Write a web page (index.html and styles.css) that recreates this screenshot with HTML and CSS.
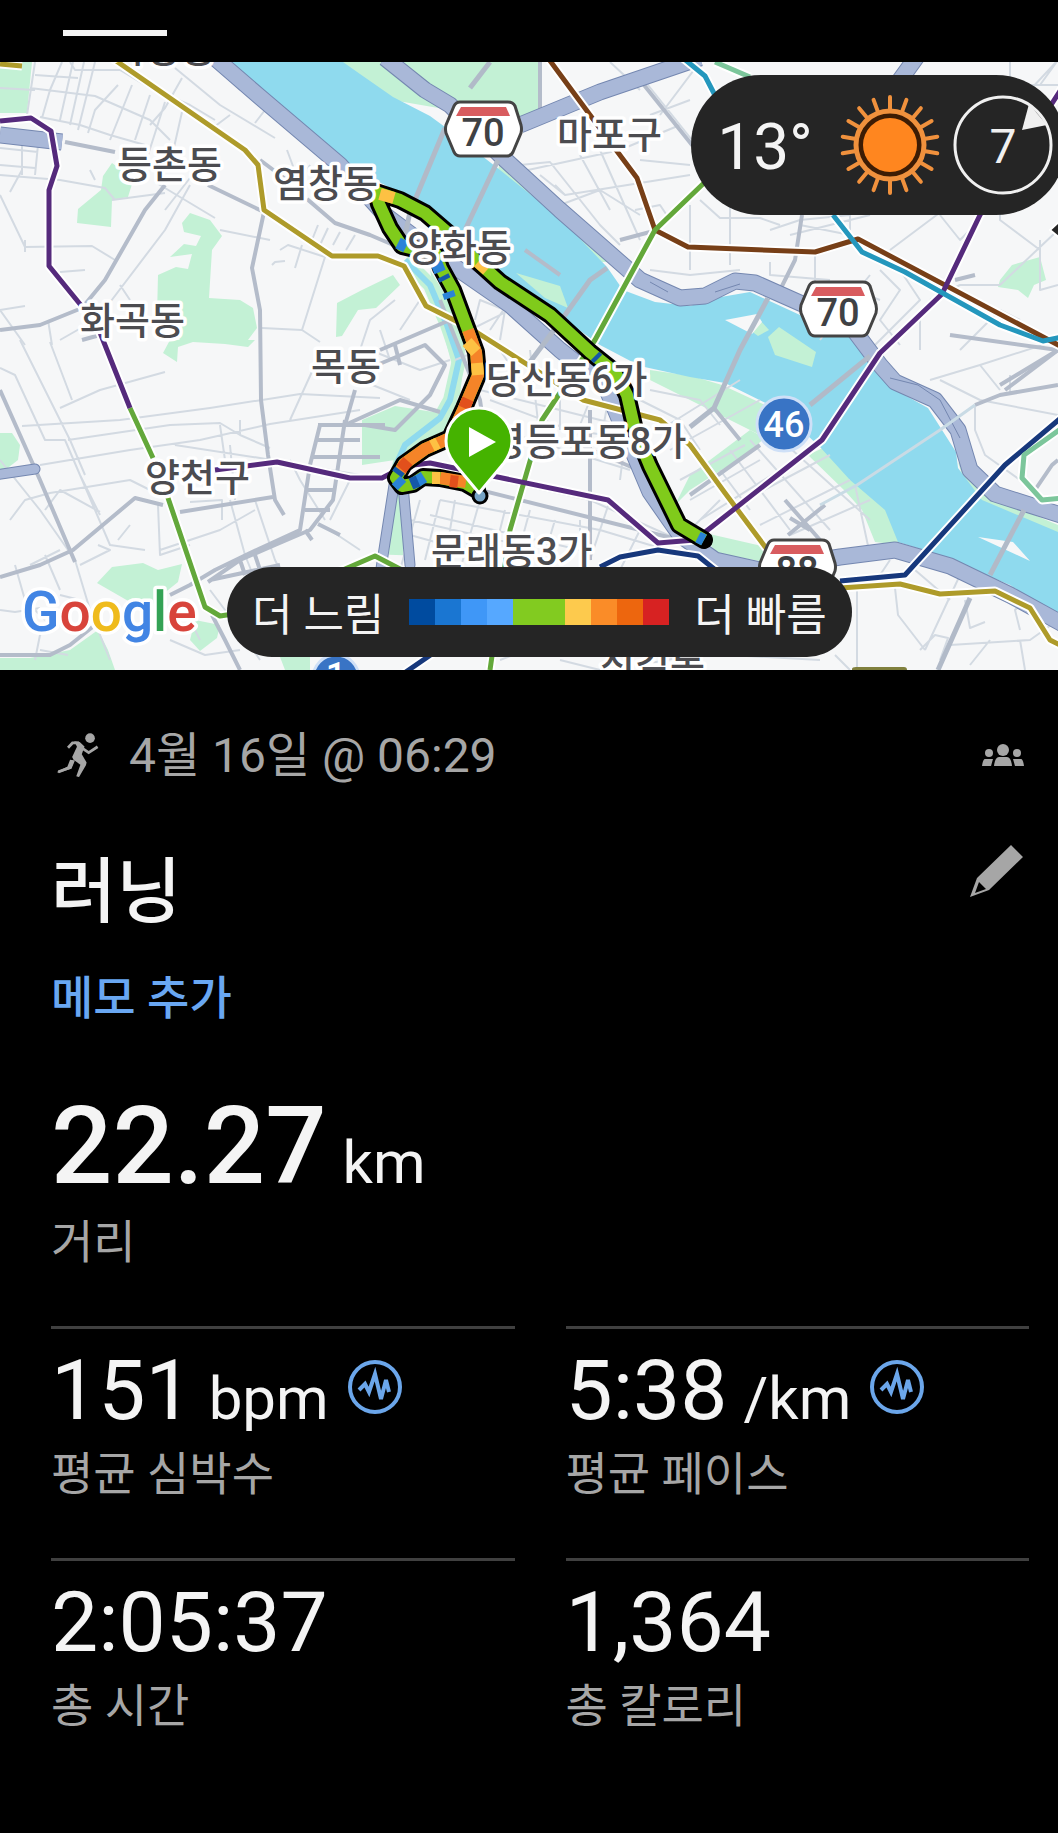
FILE: index.html
```html
<!DOCTYPE html>
<html lang="ko">
<head>
    <meta charset="UTF-8">
    <meta name="viewport" content="width=device-width, initial-scale=1.0">
    <title>러닝</title>
    <link rel="stylesheet" href="styles.css">
</head>
<body>
    <header class="tabs">
        <div class="tab-indicator"></div>
    </header>

    <section class="map">
        <svg class="map-canvas" viewBox="0 62 1058 608" role="img" aria-label="지도">
            <rect class="land" x="0" y="62" width="1058" height="608"/>

            <!-- parks -->
            <g class="park">
                <path d="M0 62H32L27 113H0Z"/>
                <path d="M77 223L78 209L101 190L103 176L112 163L124 172L132 184L128 197L112 200L111 227Z"/>
                <path d="M182 223L190 213L210 220L222 236L212 250L209 298L240 300L253 308L257 328L248 340H200L180 340L157 315L158 275L176 267L188 269L192 254L170 257L184 244L196 246L201 236L184 232Z"/>
                <path d="M163 353L170 340H255L248 347L225 344L193 342L178 347L177 362Z"/>
                <path d="M336 337L337 303L362 290L393 275L400 285L376 308L358 310L342 336Z"/>
                <path d="M0 433L12 433L20 445L18 460L0 474Z"/>
                <path d="M97 583L112 567L143 563L158 570L182 564L178 582L163 594L158 604L130 602Z"/>
                <path d="M0 658L30 658L70 650L98 630L108 650L115 670H0Z"/>
                <path d="M195 620L220 625L217 638L200 651L190 640Z"/>
                <path d="M280 657H310V670H285Z"/>
                <path d="M342 62H540V110L525 120L500 160L450 110L392 100L342 76Z"/>
                <path d="M500 162L560 212L610 262L602 262L540 205L498 170Z"/>
                <path d="M1000 280L1012 265L1040 257L1046 280L1034 285L1028 298L1018 290L998 287Z"/>
                <path d="M362 420L395 406L440 413L465 395L455 425L425 445L395 460L362 465Z"/>
                <path d="M430 270L458 315L465 350L460 395L445 410L452 365L440 320Z"/>
                <path d="M650 370L692 376L722 385L765 405L790 430L760 435L690 400L650 380Z"/>
                <path d="M690 475L750 430L765 438L745 455L690 490L675 505Z"/>
                <path d="M808 455L825 447L862 478L890 510L900 545L875 542L862 510L846 492Z"/>
                <path d="M705 533L770 548L765 562L715 553Z"/>
                <path d="M958 462L980 492L1058 525V540L985 505L965 485Z"/>
            </g>

            <!-- river and stream -->
            <path class="water" d="M222 62H343L360 74L393 97L430 116L445 127L500 170L560 218L607 267L623 290L655 302L690 306L715 298L750 292L800 315L860 342L878 365L892 388L928 408L956 452L958 468L982 500L1058 532V616L1010 585L930 552L898 542L885 510L850 480L820 447L780 410L725 383L690 377L640 366L600 345L540 302L480 256L430 215L385 185L343 165L280 107Z"/>
            <path class="stream-bank" d="M405 260L430 285L447 325L459 360L450 400L440 418L405 445L398 470L396 555"/>
            <path class="stream" d="M405 260L430 285L447 325L459 360L450 400L440 418L405 445L396 465"/>
            <g class="park">
                <path d="M516 273L560 286L568 308L545 298Z"/>
                <path d="M758 318L769 330L758 336L750 330Z"/>
                <path d="M768 337L779 327L816 352L812 367L775 355Z"/>
            </g>
            <path class="land" d="M725 320L757 314L762 322L752 334ZM978 537L1013 542L1030 561Z"/>

            <!-- small streets -->
            <path class="street" d="M35 62L27 115M62 62L50 90L42 118M73 62L60 120M84 62L70 125M95 62L78 130M118 85L95 110L88 133M132 85L110 140M150 95L135 140M165 102L148 155M182 112L170 165M35 75L78 78M30 88L95 96L150 120L170 140M40 117L80 125L110 135L145 145M0 88L35 90M0 148L38 152M0 165L35 168M22 143V175M38 145L35 175M0 175L60 180L105 188L115 200M10 192L22 170M0 195L25 247L92 246L115 260M25 240V252M60 272L85 270M112 200L165 193M90 170L95 180M155 182L215 218M165 210L190 178M108 305L165 230L190 185M120 285L130 300M175 68L220 105L275 138M210 130L230 115M255 123L265 110M182 78L165 108L150 125M240 90L215 65M70 62L75 70H120L150 88L190 105L215 120M287 150L300 185M302 180L310 165M220 230L270 240M272 265L275 262L285 261M280 250L288 245L325 257L302 330L320 342M302 330L262 328M295 268L302 245M310 245L318 225M320 245L328 228M333 245L340 232M346 250L355 235M0 310L25 345M0 310L25 306M48 320L52 345M60 340L95 320"/>
            <path class="street" d="M20 340L45 390L70 440L85 475M50 342L72 400M60 408L100 390L165 372M22 426L120 420L210 408L300 394L380 398M68 440L170 425L220 423L240 435L270 448M40 465L130 450L200 440L270 424L360 410M175 445L260 458L360 475M0 368L15 375L45 440L65 440L110 545L145 550M65 440L80 475L100 515M0 460L40 510L75 560M10 520L25 500L50 493L130 480L150 490M158 505L160 555L190 545M45 510L60 490L100 512M118 540L130 525M160 550L220 530L255 510M190 502L222 500L222 520M230 500L245 555L255 580M255 500L275 560L290 590M300 480L325 520M350 480L330 520M330 530L360 550M0 610L15 612L40 608M15 565L25 600L45 620M45 555L60 590M75 560L90 610L110 660M80 565L110 550L98 545M30 565L60 550M60 595L80 600M35 660L40 635L60 620M40 650L68 655M210 590L240 630L260 660M170 640L205 655L240 650M180 600L200 640M290 590L320 620M240 420V435M220 425L225 460M230 445L235 500M290 460L300 480M290 420L315 365"/>
            <path class="street" d="M520 165L550 162L600 225L620 245M528 170L620 150L680 125M540 175L565 195L690 175M580 155L610 210M600 150L640 240M560 205L600 190L640 215M565 195L555 185M610 62L640 90M640 75L700 150M650 115L690 100M700 62L660 115M635 210L660 205L670 220M650 270L690 275L740 270M690 205V270M730 190V265M700 200L720 218H760L780 225M770 230L800 220L850 215M790 235L870 215M850 210V235L800 225M690 240V262M770 262V275L830 280M815 255V290M870 275L850 300L820 340M880 270L900 290L880 320L900 345M830 320L870 350L900 320M880 300L840 285M900 270L920 300L890 330M920 310V350M930 300L960 285H1000L1058 230M890 250L970 190L1058 150M940 215L960 240L975 225M1000 180V220L1040 250M1040 240V290L1058 285M960 350L1000 310L1020 320M1010 62V85H1058M1030 90L1058 60M1058 60L1040 85M930 380L980 365L1058 340M940 380L980 400L1058 415M975 405V430L985 455L1020 480M1010 375V395M980 365L1000 390M700 150L740 180M640 160L690 165"/>
            <path class="street" d="M500 350L510 365M470 330L530 300M455 360L480 350M475 320L480 300L505 310L500 340M510 300L490 330M480 390L560 410L620 425M490 400L570 430L640 440M500 430L630 470M530 350L540 440M560 360V430M590 400L570 450M610 390L600 445M630 400L620 480M440 500L600 530L700 560M430 515L580 550M450 470L590 500L690 545M420 500L400 570M440 500L425 560M455 500L445 560M480 500L460 570M505 510L490 570M530 510L515 565M555 520L540 570M580 520V560M610 500L590 560M640 530L620 570M410 520L520 545M410 535L500 560M370 350L420 370L450 360M360 380L410 400M380 330L390 360M395 300L370 320L360 350M420 300L400 330M650 390L700 400L720 425M640 400L680 420L700 450M660 430L740 380M670 450L760 400M680 480L745 445M690 500L760 460M700 520L780 470M730 450L790 530M750 440L830 530M770 430L870 520M720 470L750 510M745 500L830 455M760 525L850 480M790 535L870 500M690 530L720 500M855 485L870 555"/>
            <path class="street" d="M857 580V670M895 588L898 615L925 650M925 650L960 575M920 650L935 635L948 638L940 660M950 645L1030 640L1058 620M965 600L970 628L985 622M1020 630L1015 610L1025 600M1020 640L1025 670M970 665L990 640M500 660L540 645M560 660L600 670M640 665L720 650M730 655L820 660M835 655L850 670M880 575L890 560M915 570L950 600"/>

            <!-- main roads -->
            <g class="road">
                <path d="M65 142L115 152M208 185L264 212L252 268L260 310L261 400L268 455L275 500L284 515"/>
                <path d="M0 330L40 325L82 308L105 280L145 210L165 185M82 340L100 335"/>
                <path d="M0 390L40 480L75 562M0 577L40 565L73 550L135 498L163 505M180 512L273 497"/>
                <path d="M307 199L335 223L370 235L405 250M260 160L300 190"/>
                <path d="M345 420L333 500L310 530L275 545L240 560L208 582M320 425L310 465L300 530L250 553L215 570L190 585L170 595M318 425H385M316 440H360M313 457H380M308 490H335M305 510H330M318 524L340 535M355 390L345 425M210 580L280 565M240 560L245 575M255 555L260 570M305 530L312 540"/>
                <path d="M0 655H50L70 645L95 625M212 615L225 640L240 670M540 62V110M640 80L720 180"/>
                <path d="M345 425L400 400L440 412M380 350L450 320M365 370L425 345L445 365L430 395L395 430L365 425M395 345L400 365"/>
                <path d="M620 240L650 232M525 250L560 275M440 480L700 545M580 445L650 475M590 410V560"/>
                <path d="M690 495L760 445M714 408L740 440M785 500L820 540M788 535L825 505M790 518L810 530M950 335L1058 350M955 280L975 275M1058 350L1005 390"/>
                <path d="M440 300L480 400L490 470M802 215L795 260L780 290M1058 385L1000 395L975 405M1058 350L1000 385M1035 490L1052 465L1058 460"/>
            </g>

            <!-- expressways -->
            <g class="expressway-edge">
                <path d="M215 58L260 97L340 165L385 215L445 260L510 305L560 350L605 385L628 440L650 492L680 535L715 560L760 570L840 557L895 550L950 566L1010 595L1070 628"/>
                <path d="M385 58L425 90L450 105L500 155L560 210L600 245L640 280L680 298L705 296L735 281L755 283L800 303L850 325L880 365L895 382L935 400L958 430L970 470L995 494L1070 518"/>
                <path d="M520 125L600 92L700 58M0 135L62 142M900 80L918 55"/>
            </g>
            <g class="expressway">
                <path d="M215 58L260 97L340 165L385 215L445 260L510 305L560 350L605 385L628 440L650 492L680 535L715 560L760 570L840 557L895 550L950 566L1010 595L1070 628"/>
                <path d="M385 58L425 90L450 105L500 155L560 210L600 245L640 280L680 298L705 296L735 281L755 283L800 303L850 325L880 365L895 382L935 400L958 430L970 470L995 494L1070 518"/>
                <path d="M520 125L600 92L700 58M0 135L62 142M900 80L918 55"/>
            </g>
            <path class="link-edge" d="M-5 475L35 469M394 485L380 575M403 485L410 565"/>
            <path class="link" d="M-5 475L35 469M394 485L380 575M403 485L410 565"/>
            <path class="ramp" d="M890 378L918 385L940 400L960 438M715 292L740 284M650 282L668 292"/>

            <!-- bridges -->
            <g class="bridge">
                <path d="M490 62L470 88M445 128L410 212L404 240M498 160L465 230M607 268L590 280L560 322L530 362M768 298L740 350L714 408L690 427"/>
                <path d="M870 356L810 405M1024 510L990 575M970 598L938 670"/>
                <path class="bridge-light" d="M820 505L857 485L940 430L975 405"/>
            </g>

            <!-- subway lines, white casing below -->
            <g class="subway-casing">
                <path d="M0 64L22 66M112 58L245 150L258 165L264 210L332 256L378 256L404 266L426 306L470 328L528 365L583 400L660 420L690 445L725 493L775 560M840 588L900 584L940 594L995 591L1030 608L1050 640L1062 646"/>
                <path d="M0 121L31 118L51 131L57 166L49 190V266L97 325L130 408M215 470L277 462L350 478H382L405 466L430 463L608 500L658 543L695 540L822 440L880 353L942 294L980 215L1062 88"/>
                <path d="M130 408L153 458M167 495L205 607L220 616L240 613L345 569L375 556L400 569M705 182L655 230L595 340L542 420L510 530L490 670"/>
                <path d="M548 58L590 115L637 178L655 230L688 247L815 252L858 239L1062 347M683 58L705 76L720 105M833 215L862 252L905 272L1000 325L1043 341L1062 337"/>
                <path d="M600 567L620 557L658 550L698 556L718 572M400 676L445 645M840 581L905 575L1005 465L1062 417M1062 428L1024 455L1022 478L1042 500L1062 498M715 62L750 77"/>
            </g>
            <g class="subway">
                <path class="gold" d="M0 64L22 66M112 58L245 150L258 165L264 210L332 256L378 256L404 266L426 306L470 328L528 365L583 400L660 420L690 445L725 493L775 560M840 588L900 584L940 594L995 591L1030 608L1050 640L1062 646"/>
                <path class="brown" d="M548 58L590 115L637 178L655 230L688 247L815 252L858 239L1062 347"/>
                <path class="green" d="M130 408L153 458M167 495L205 607L220 616L240 613L345 569L375 556L400 569M705 182L655 230L595 340L542 420L510 530L490 670"/>
                <path class="purple" d="M0 121L31 118L51 131L57 166L49 190V266L97 325L130 408M215 470L277 462L350 478H382L405 466L430 463L608 500L658 543L695 540L822 440L880 353L942 294L980 215L1062 88"/>
                <path class="cyan" d="M683 58L705 76L720 105M833 215L862 252L905 272L1000 325L1043 341L1062 337"/>
                <path class="navy" d="M600 567L620 557L658 550L698 556L718 572M400 676L445 645M840 581L905 575L1005 465L1062 417"/>
                <path class="mint" d="M1062 428L1024 455L1022 478L1042 500L1062 498M715 62L750 77"/>
            </g>
            <path class="line-badge" d="M852 670V669Q852 667 856 667H904Q907 667 907 670Z"/>

            <!-- recorded track, coloured by pace -->
            <path class="track-edge" d="M477 490L465 483L440 478L423 477L413 484L402 486L396 478L404 464L425 449L450 438L464 408L478 375L476 352L466 325L453 290L441 268L436 254L402 246L390 228L379 204L376 192L400 200L425 213L447 232L478 262L500 282L550 315L590 352L615 372L627 395L635 430L650 466L679 525L704 540"/>
            <path class="track" d="M477 490L465 483L440 478L423 477L413 484L402 486L396 478L404 464L425 449L450 438L464 408L478 375L476 352L466 325L453 290L441 268L436 254L402 246L390 228L379 204L376 192L400 200L425 213L447 232L478 262L500 282L550 315L590 352L615 372L627 395L635 430L650 466L679 525L704 540"/>
            <g class="track">
                <path class="fast" d="M466 482L440 478M400 472L404 464L425 449L450 438L464 408L478 375L476 352L468 330"/>
                <path class="warm" d="M467 342L476 352M478 375L477 363M440 478L432 478M432 446L438 443M380 194L394 198M478 262L487 270"/>
                <path class="red" d="M458 482L450 481M464 408L468 399M401 469L408 461"/>
                <path class="slow" d="M424 477L416 482M402 486L396 480M436 262L440 272M448 292L450 298M398 243L406 247M698 537L704 540"/>
                <path class="blue" d="M418 481L411 484M397 474L400 470M595 356L598 359M443 276L445 280"/>
            </g>
            <circle class="track-end" cx="480" cy="496" r="7"/>

            <!-- place names -->
            <g class="place">
                <text x="111" y="62">가양동</text>
                <text x="117" y="178">등촌동</text>
                <text x="273" y="197">염창동</text>
                <text x="407" y="261">양화동</text>
                <text x="557" y="148">마포구</text>
                <text x="80" y="334">화곡동</text>
                <text x="311" y="380">목동</text>
                <text x="486" y="393">당산동6가</text>
                <text x="490" y="455">영등포동8가</text>
                <text x="145" y="491">양천구</text>
                <text x="431" y="565">문래동3가</text>
                <text x="600" y="679">신길동</text>
            </g>

            <!-- route shields -->
            <g class="shield">
                <path class="shield-body" d="M460 102H508Q513 102 515 106L521 125Q522 129 521 133L513 152Q511 156 507 156H460Q456 156 454 152L446 133Q445 129 446 125L454 106Q456 102 460 102Z"/>
                <path class="shield-top" d="M461 107H506L510 116H456Z"/>
                <text x="483" y="146">70</text>
            </g>
            <g class="shield">
                <path class="shield-body" d="M815 282H863Q868 282 870 286L876 305Q877 309 876 313L868 332Q866 336 862 336H815Q811 336 809 332L801 313Q800 309 801 305L809 286Q811 282 815 282Z"/>
                <path class="shield-top" d="M816 287H861L865 296H811Z"/>
                <text x="838" y="326">70</text>
            </g>
            <g class="shield">
                <path class="shield-body" d="M774 540H822Q827 540 829 544L835 563Q836 567 835 571L827 590Q825 594 821 594H774Q770 594 768 590L760 571Q759 567 760 563L768 544Q770 540 774 540Z"/>
                <path class="shield-top" d="M775 545H820L824 554H770Z"/>
                <text x="797" y="584">88</text>
            </g>
            <g class="route-badge">
                <circle cx="784" cy="424" r="27"/>
                <text x="784" y="437">46</text>
                <circle cx="336" cy="678" r="23"/>
                <text x="336" y="688">1</text>
            </g>

            <!-- start pin -->
            <path class="pin" d="M479 493L454 463Q446 452 446 441A33 33 0 0 1 512 441Q512 452 504 463Z"/>
            <path class="pin-play" d="M469 427V457L496 442Z"/>
            <path class="nav-arrow" d="M1050 230L1062 219V240Z"/>

            <text class="google" x="22" y="631"><tspan class="g-blue">G</tspan><tspan class="g-red">o</tspan><tspan class="g-yellow">o</tspan><tspan class="g-blue">g</tspan><tspan class="g-green">l</tspan><tspan class="g-red">e</tspan></text>
        </svg>

        <div class="weather">
            <span class="temperature">13°</span>
            <svg class="sun" viewBox="-50 -50 100 100" aria-hidden="true">
                <circle class="sun-ring" r="34"/>
                <circle class="sun-core" r="27"/>
                <path class="sun-rays" id="rays" d="M0 -48V-36M0 48V36"/>
                <use href="#rays" transform="rotate(20)"/>
                <use href="#rays" transform="rotate(40)"/>
                <use href="#rays" transform="rotate(60)"/>
                <use href="#rays" transform="rotate(80)"/>
                <use href="#rays" transform="rotate(100)"/>
                <use href="#rays" transform="rotate(120)"/>
                <use href="#rays" transform="rotate(140)"/>
                <use href="#rays" transform="rotate(160)"/>
            </svg>
            <svg class="wind" viewBox="-50 -50 100 100" role="img" aria-label="바람 7">
                <circle r="48"/>
                <path d="M26 -41L19 -15L44 -20Z"/>
                <text y="18">7</text>
            </svg>
        </div>

        <div class="legend">
            <span>더 느림</span>
            <div class="legend-bar">
                <i class="c1"></i><i class="c2"></i><i class="c3"></i><i class="c4"></i><i class="c5"></i><i class="c5"></i><i class="c6"></i><i class="c7"></i><i class="c8"></i><i class="c9"></i>
            </div>
            <span>더 빠름</span>
        </div>
    </section>

    <main class="activity">
        <div class="row date-row">
            <svg class="runner" viewBox="52 98 122 130" aria-hidden="true">
                <circle cx="148" cy="113" r="14"/>
                <path class="torso" d="M102 122L118 124L132 137L124 160L138 184L136 192L116 226L108 224L120 190L100 176L96 168L110 138Z"/>
                <path class="limb" d="M84 141L97 127L116 127M124 141L144 155L170 138M98 178L90 198L56 211"/>
                <path class="torso" d="M90 176L104 178L94 202L54 214V209L82 196Z"/>
            </svg>
            <span class="date">4월 16일 @ 06:29</span>
            <svg class="group" viewBox="0 0 42 22" aria-hidden="true">
                <circle cx="21" cy="6" r="6"/>
                <path d="M12 22Q13 13 17 13H25Q29 13 30 22Z"/>
                <circle cx="7" cy="9" r="4"/>
                <path d="M0 22Q1 15 3 15H11L9 22Z"/>
                <circle cx="35" cy="9" r="4"/>
                <path d="M42 22Q41 15 39 15H31L33 22Z"/>
            </svg>
        </div>

        <div class="row title-row">
            <h1>러닝</h1>
            <button class="edit" type="button" aria-label="편집">
                <svg viewBox="0 0 54 54" aria-hidden="true">
                    <path d="M41 1L53 13L19 46L0 53L7 34ZM9 38L5 49L16 45Z" fill-rule="evenodd"/>
                </svg>
            </button>
        </div>

        <a class="memo" href="#memo">메모 추가</a>

        <div class="stat stat-main">
            <div class="value">22.27 <span class="unit">km</span></div>
            <div class="label">거리</div>
        </div>

        <div class="stats">
            <div class="stat">
                <div class="value">151 <span class="unit">bpm</span>
                    <button class="pulse" type="button" aria-label="심박수 그래프">
                        <svg viewBox="0 0 54 54" aria-hidden="true"><circle cx="27" cy="27" r="25"/><path d="M11 30L17 24L21 32L27 14L33 39L38 20L41 32"/></svg>
                    </button>
                </div>
                <div class="label">평균 심박수</div>
            </div>
            <div class="stat">
                <div class="value">5:38 <span class="unit">/km</span>
                    <button class="pulse" type="button" aria-label="페이스 그래프">
                        <svg viewBox="0 0 54 54" aria-hidden="true"><circle cx="27" cy="27" r="25"/><path d="M11 30L17 24L21 32L27 14L33 39L38 20L41 32"/></svg>
                    </button>
                </div>
                <div class="label">평균 페이스</div>
            </div>
            <div class="stat">
                <div class="value">2:05:37</div>
                <div class="label">총 시간</div>
            </div>
            <div class="stat">
                <div class="value">1,364</div>
                <div class="label">총 칼로리</div>
            </div>
        </div>
    </main>
</body>
</html>
```
FILE: styles.css
```css
* {
    box-sizing: border-box;
}
body {
    margin: 0;
    background: #000;
    color: #f4f4f4;
    font-family: Roboto, "Noto Sans CJK KR", sans-serif;
}
button {
    padding: 0;
    border: none;
    background: none;
    cursor: pointer;
}
svg {
    display: block;
}

/* top bar */
.tabs {
    height: 62px;
    padding: 30px 63px 0;
}
.tab-indicator {
    width: 104px;
    height: 6px;
    background: #f4f4f4;
}

/* map */
.map {
    position: relative;
    overflow: hidden;
}
.map-canvas {
    width: 100%;
}
.map-canvas path {
    fill: none;
    stroke-linejoin: round;
}
.map-canvas .land {
    fill: #f6f7f8;
}
.map-canvas .park path {
    fill: #c3f1d5;
}
.map-canvas .water {
    fill: #8fdaee;
}
.stream-bank {
    stroke: #c3f1d5;
    stroke-width: 14;
}
.stream {
    stroke: #8fdaee;
    stroke-width: 6;
}
.street {
    stroke: #d3dae2;
    stroke-width: 2;
}
.road {
    stroke: #b4bcca;
    stroke-width: 4;
}
.expressway-edge {
    stroke: #7487b0;
    stroke-width: 17;
}
.expressway {
    stroke: #a9b8d8;
    stroke-width: 15;
}
.link-edge {
    stroke: #7487b0;
    stroke-width: 11;
    stroke-linecap: round;
}
.link {
    stroke: #a9b8d8;
    stroke-width: 9;
    stroke-linecap: round;
}
.ramp {
    stroke: #7487b0;
    stroke-width: 1;
}
.bridge {
    stroke: #b1bac8;
    stroke-width: 5;
}
.bridge-light {
    stroke: #c9dbe5;
    stroke-width: 3;
}
.subway-casing {
    stroke: #fff;
    stroke-width: 9;
}
.subway {
    stroke-width: 5;
}
.gold { stroke: #ae9b2a; }
.brown { stroke: #773f17; }
.green { stroke: #63a83a; }
.purple { stroke: #552a7c; }
.cyan { stroke: #2497bd; }
.navy { stroke: #17387c; }
.mint { stroke: #7cc69b; }
.map-canvas .line-badge {
    fill: #80803e;
}
.track-edge {
    stroke: #000;
    stroke-width: 18;
    stroke-linecap: round;
}
.track {
    stroke: #80cb1b;
    stroke-width: 12;
}
.track .fast { stroke: #f58428; }
.track .warm { stroke: #fdc143; }
.track .red { stroke: #e2501c; }
.track .slow { stroke: #2a83d8; }
.track .blue { stroke: #1558a8; }
.track-end {
    fill: #76a3c4;
    stroke: #000;
    stroke-width: 3;
}
.place {
    fill: #4c4c50;
    stroke: #fff;
    stroke-width: 7;
    stroke-linejoin: round;
    paint-order: stroke;
    font-size: 38px;
    font-weight: 500;
}
.map-canvas .shield-body {
    fill: #fff;
    stroke: #444;
    stroke-width: 3;
}
.map-canvas .shield-top {
    fill: #d85c5f;
}
.shield text {
    fill: #3f4144;
    font-size: 38px;
    font-weight: 500;
    text-anchor: middle;
}
.route-badge circle {
    fill: #3974c5;
    stroke: #cfe0f7;
    stroke-width: 3;
}
.route-badge text {
    fill: #fff;
    font-size: 36px;
    font-weight: 500;
    text-anchor: middle;
}
.map-canvas .pin {
    fill: #45b300;
    stroke: #fff;
    stroke-width: 3;
}
.map-canvas .pin-play {
    fill: #fff;
}
.map-canvas .nav-arrow {
    fill: #252525;
    stroke: #fff;
    stroke-width: 2;
}
.google {
    stroke: #fff;
    stroke-width: 7;
    stroke-linejoin: round;
    paint-order: stroke;
    font-size: 55px;
    font-weight: 500;
}
.g-blue { fill: #4285e4; }
.g-red { fill: #d8443b; }
.g-yellow { fill: #efbb1c; }
.g-green { fill: #34a255; }

/* overlays on the map */
.weather {
    position: absolute;
    top: 13px;
    right: -8px;
    display: flex;
    align-items: center;
    gap: 13px;
    height: 140px;
    padding: 0 13px 0 26px;
    border-radius: 70px;
    background: #252525;
}
.temperature {
    padding-top: 4px;
    margin-right: 14px;
    font-size: 64px;
}
.sun,
.wind {
    width: 100px;
    height: 100px;
}
.sun-core {
    fill: #ff861f;
}
.sun-ring {
    fill: #3d1c04;
    stroke: #f0913d;
    stroke-width: 5;
}
.sun-rays {
    stroke: #f0913d;
    stroke-width: 4;
    stroke-linecap: round;
}
.wind circle {
    fill: none;
    stroke: #f0f0f0;
    stroke-width: 3;
}
.wind path,
.wind text {
    fill: #f0f0f0;
}
.wind text {
    font-size: 48px;
    text-anchor: middle;
}
.legend {
    position: absolute;
    bottom: 13px;
    left: 227px;
    display: flex;
    align-items: center;
    gap: 25px;
    height: 90px;
    padding: 0 25px;
    border-radius: 45px;
    background: #252525;
    font-size: 44px;
    white-space: nowrap;
}
.legend-bar {
    display: flex;
}
.legend-bar i {
    width: 26px;
    height: 26px;
}
.c1 { background: #004b9f; }
.c2 { background: #1a76d2; }
.c3 { background: #3f97f7; }
.c4 { background: #56a8ff; }
.c5 { background: #82cb20; }
.c6 { background: #fdca4d; }
.c7 { background: #fa8c28; }
.c8 { background: #ed660e; }
.c9 { background: #d72222; }

/* activity details */
.activity {
    padding: 52px 29px 90px 51px;
}
.row {
    display: flex;
    align-items: center;
    justify-content: space-between;
    padding-right: 5px;
}
.date-row {
    height: 66px;
    gap: 30px;
    padding-left: 6px;
    color: #a6a6a6;
    font-size: 48px;
}
.date {
    flex: 1;
    padding-bottom: 8px;
}
.runner {
    width: 42px;
    fill: currentColor;
}
.limb {
    fill: none;
    stroke: currentColor;
    stroke-width: 8;
}
.group {
    width: 42px;
    fill: currentColor;
}
.title-row {
    align-items: flex-start;
    margin-top: 56px;
}
h1 {
    margin: 0;
    font-size: 71px;
    font-weight: 500;
    line-height: 96px;
}
.edit {
    width: 54px;
}
.edit svg {
    fill: #a6a6a6;
}
.memo {
    display: inline-block;
    margin-top: 28px;
    color: #69a7f2;
    font-size: 46px;
    font-weight: 500;
    line-height: 60px;
    text-decoration: none;
}
.value {
    display: flex;
    align-items: baseline;
    gap: 16px;
    font-size: 84px;
    line-height: 114px;
}
.unit {
    font-size: 60px;
    line-height: 60px;
}
.pulse {
    align-self: flex-start;
    width: 54px;
    margin: 26px 0 0 3px;
}
.pulse svg {
    fill: none;
    stroke: #6ba6ea;
    stroke-width: 4;
}
.label {
    color: #a6a6a6;
    font-size: 46px;
    line-height: 52px;
}
.stat-main {
    margin-top: 54px;
}
.stat-main .value {
    font-size: 108px;
    font-weight: 500;
    line-height: 128px;
}
.stat-main .unit {
    font-weight: 400;
    line-height: 60px;
}
.stat-main .label {
    line-height: 64px;
}
.stats {
    display: grid;
    grid-template-columns: 1fr 1fr;
    column-gap: 51px;
    margin-top: 52px;
}
.stats .stat {
    height: 232px;
    padding-top: 5px;
    border-top: 3px solid #404040;
}
```
